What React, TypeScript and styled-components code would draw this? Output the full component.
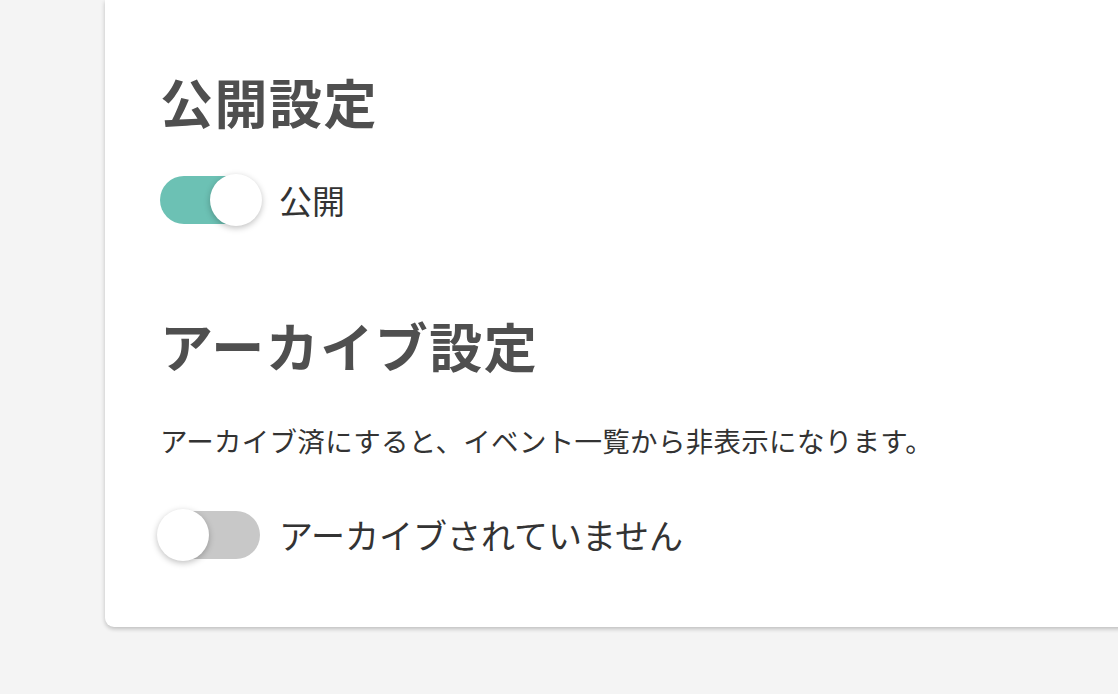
import React, { useState } from 'react'
import styled, { createGlobalStyle } from 'styled-components'

const GlobalStyle = createGlobalStyle`
  html, body {
    margin: 0;
    padding: 0;
    background: #f4f4f4;
  }
  body {
    font-family: "Noto Sans CJK JP", "Noto Sans", sans-serif;
    color: #333;
  }
`

const Page = styled.div`
  padding-left: 105px;
  min-height: 694px;
  box-sizing: border-box;
`

const Card = styled.section`
  background: #fff;
  border-radius: 0 0 0 9px;
  box-shadow: 0 2px 4px rgba(0, 0, 0, 0.22);
  padding: 75px 0 65px 55px;
  width: calc(100% + 20px);
  box-sizing: border-box;
`

const Heading = styled.h2<{ $gap?: number }>`
  margin: ${p => p.$gap ?? 0}px 0 0;
  font-size: 53px;
  line-height: 1;
  font-weight: 700;
  color: #4f4f4f;
  letter-spacing: 1.5px;
`

const Description = styled.p`
  margin: 55px 0 0;
  font-size: 27.5px;
  line-height: 1;
  color: #333;
  letter-spacing: 0.3px;
`

const ToggleRow = styled.label<{ $gap: number }>`
  display: flex;
  align-items: center;
  gap: 19px;
  height: 54px;
  margin-top: ${p => p.$gap}px;
  cursor: pointer;
`

const Track = styled.span<{ $on: boolean }>`
  position: relative;
  display: block;
  width: 100px;
  height: 48px;
  border-radius: 24px;
  background: ${p => (p.$on ? '#6cc1b4' : '#c8c8c8')};
  transition: background 0.2s;
  flex-shrink: 0;
`

const Knob = styled.span<{ $on: boolean }>`
  position: absolute;
  top: -2px;
  left: ${p => (p.$on ? '50px' : '-3px')};
  width: 52px;
  height: 52px;
  border-radius: 50%;
  background: #fff;
  box-shadow: 0 2px 6px rgba(0, 0, 0, 0.25);
  transition: left 0.2s;
`

const Label = styled.span<{ $size: number }>`
  font-size: ${p => p.$size}px;
  line-height: 1;
  color: #333;
`

const Toggle = ({ on, onClick, label, size, gap }: {
  on: boolean; onClick: () => void; label: string; size: number; gap: number
}) => (
  <ToggleRow $gap={gap} onClick={onClick}>
    <Track $on={on}><Knob $on={on} /></Track>
    <Label $size={size}>{label}</Label>
  </ToggleRow>
)

export default function App() {
  const [published, setPublished] = useState(true)
  const [archived, setArchived] = useState(false)

  return (
    <Page>
      <GlobalStyle />
      <Card>
        <Heading>公開設定</Heading>
        <Toggle
          on={published}
          onClick={() => setPublished(!published)}
          label={published ? '公開' : '非公開'}
          size={33}
          gap={45}
        />
        <Heading $gap={92}>アーカイブ設定</Heading>
        <Description>アーカイブ済にすると、イベント一覧から非表示になります。</Description>
        <Toggle
          on={archived}
          onClick={() => setArchived(!archived)}
          label={archived ? 'アーカイブ済' : 'アーカイブされていません'}
          size={34}
          gap={53}
        />
      </Card>
    </Page>
  )
}
